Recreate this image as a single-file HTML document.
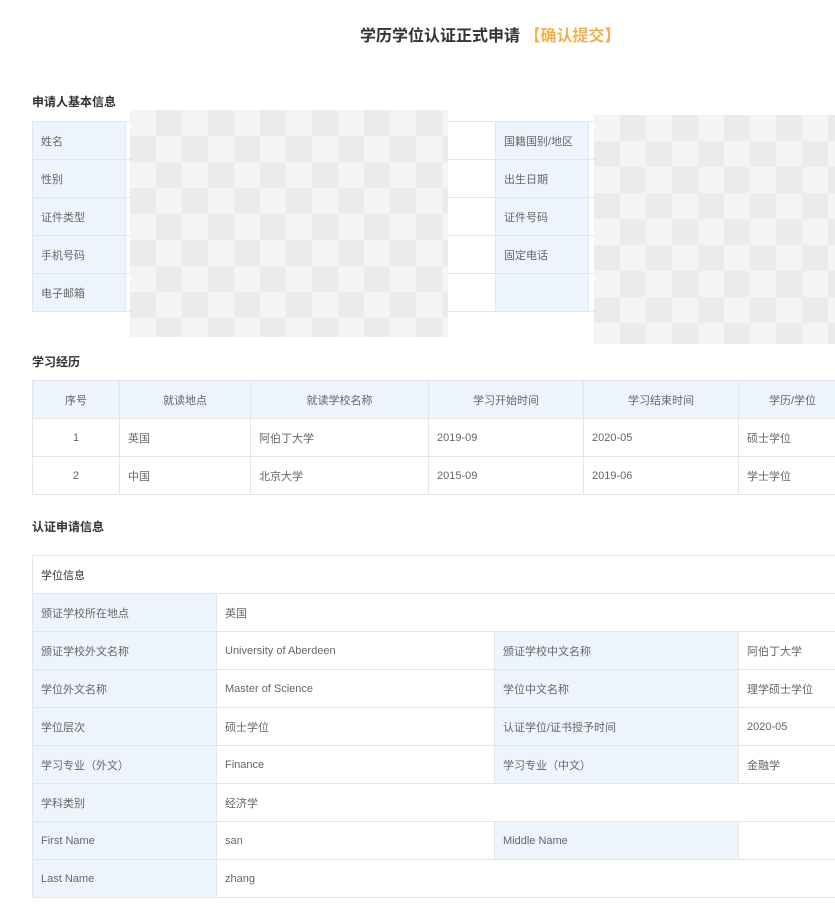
<!DOCTYPE html>
<html><head><meta charset="utf-8"><style>
*{margin:0;padding:0;box-sizing:border-box}
body{width:835px;height:907px;background:#fff;font-family:"Liberation Sans","Noto Sans CJK SC",sans-serif;color:#666;font-size:11px;position:relative;overflow:hidden}
.a{position:absolute}
.h{font-size:12px;font-weight:bold;color:#333}
table{border-collapse:collapse;position:absolute;table-layout:fixed}
td{border:1px solid #dfe6ee;height:38px;padding:0 8px;white-space:nowrap;overflow:hidden;vertical-align:middle}
.l{background:#eef4fb}
.c td{text-align:center}
.chk{position:absolute;background-color:#f4f4f4;background-image:linear-gradient(45deg,#ebebeb 25%,transparent 25%,transparent 75%,#ebebeb 75%),linear-gradient(45deg,#ebebeb 25%,transparent 25%,transparent 75%,#ebebeb 75%);background-size:52px 52px;background-position:0 0,26px 26px}
</style></head><body>
<div class="a" style="left:360px;top:22px;font-size:16px;font-weight:bold;color:#333">学历学位认证正式申请 <span style="color:#f2b04a">【确认提交】</span></div>
<div class="a h" style="left:32px;top:93px">申请人基本信息</div>
<table style="left:32px;top:121px;width:803px">
<colgroup><col style="width:93px"><col style="width:370px"><col style="width:93px"><col></colgroup>
<tr><td class="l">姓名</td><td></td><td class="l">国籍国别/地区</td><td></td></tr>
<tr><td class="l">性别</td><td></td><td class="l">出生日期</td><td></td></tr>
<tr><td class="l">证件类型</td><td></td><td class="l">证件号码</td><td></td></tr>
<tr><td class="l">手机号码</td><td></td><td class="l">固定电话</td><td></td></tr>
<tr><td class="l">电子邮箱</td><td></td><td class="l"></td><td></td></tr>
</table>
<div class="chk" style="left:130px;top:110px;width:318px;height:227px"></div>
<div class="chk" style="left:594px;top:115px;width:241px;height:229px"></div>
<div class="a h" style="left:32px;top:353px">学习经历</div>
<table class="c" style="left:32px;top:380px;width:870px">
<colgroup><col style="width:87px"><col style="width:131px"><col style="width:178px"><col style="width:155px"><col style="width:155px"><col></colgroup>
<tr class="l"><td>序号</td><td>就读地点</td><td>就读学校名称</td><td>学习开始时间</td><td>学习结束时间</td><td style="text-align:left;padding-left:30px">学历/学位</td></tr>
<tr><td>1</td><td style="text-align:left">英国</td><td style="text-align:left">阿伯丁大学</td><td style="text-align:left">2019-09</td><td style="text-align:left">2020-05</td><td style="text-align:left">硕士学位</td></tr>
<tr><td>2</td><td style="text-align:left">中国</td><td style="text-align:left">北京大学</td><td style="text-align:left">2015-09</td><td style="text-align:left">2019-06</td><td style="text-align:left">学士学位</td></tr>
</table>
<div class="a h" style="left:32px;top:518px">认证申请信息</div>
<table style="left:32px;top:555px;width:900px">
<colgroup><col style="width:184px"><col style="width:278px"><col style="width:244px"><col></colgroup>
<tr><td colspan="4" style="color:#333">学位信息</td></tr>
<tr><td class="l">颁证学校所在地点</td><td colspan="3">英国</td></tr>
<tr><td class="l">颁证学校外文名称</td><td>University of Aberdeen</td><td class="l">颁证学校中文名称</td><td>阿伯丁大学</td></tr>
<tr><td class="l">学位外文名称</td><td>Master of Science</td><td class="l">学位中文名称</td><td>理学硕士学位</td></tr>
<tr><td class="l">学位层次</td><td>硕士学位</td><td class="l">认证学位/证书授予时间</td><td>2020-05</td></tr>
<tr><td class="l">学习专业（外文）</td><td>Finance</td><td class="l">学习专业（中文）</td><td>金融学</td></tr>
<tr><td class="l">学科类别</td><td colspan="3">经济学</td></tr>
<tr><td class="l">First Name</td><td>san</td><td class="l">Middle Name</td><td></td></tr>
<tr><td class="l">Last Name</td><td colspan="3">zhang</td></tr>
</table>
</body></html>
